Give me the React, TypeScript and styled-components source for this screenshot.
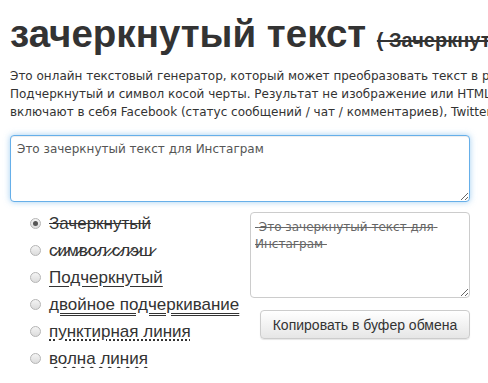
import React, { useEffect, useRef, useState } from 'react';
import styled, { createGlobalStyle, css } from 'styled-components';

const Global = createGlobalStyle`
  html, body {
    margin: 0;
    padding: 0;
    background: #fff;
    overflow: hidden;
  }
  body {
    font-family: "Liberation Sans", Arial, sans-serif;
    color: #333;
  }
`;

type StyleKind = 'strike' | 'slash' | 'under' | 'double' | 'dotted' | 'wave';

// symbol slash uses the combining short solidus overlay, as the real generator does
const slash = (s: string) =>
  s
    .split('')
    .map((c) => c + '\u0337')
    .join('');

const options: { kind: StyleKind; label: string }[] = [
  { kind: 'strike', label: 'Зачеркнутый' },
  { kind: 'slash', label: slash('символ слэш') },
  { kind: 'under', label: 'Подчеркнутый' },
  { kind: 'double', label: 'двойное подчеркивание' },
  { kind: 'dotted', label: 'пунктирная линия' },
  { kind: 'wave', label: 'волна линия' },
];

const App = () => {
  const [text, setText] = useState('Это зачеркнутый текст для Инстаграм');
  const [kind, setKind] = useState<StyleKind>('strike');
  const inputRef = useRef<HTMLTextAreaElement>(null);

  useEffect(() => {
    const el = inputRef.current;
    if (el) {
      el.focus();
      el.setSelectionRange(el.value.length, el.value.length);
    }
  }, []);

  return (
    <>
      <Global />
      <Page>
        <Title>
          зачеркнутый текст <Sub>( Зачеркнутый текст )</Sub>
        </Title>
        <Intro>
          <span>Это онлайн текстовый генератор, который может преобразовать текст в различные стили: Зачеркнутый,</span>
          <span>Подчеркнутый и символ косой черты. Результат не изображение или HTML, а текст Unicode,</span>
          <span>включают в себя Facebook (статус сообщений / чат / комментариев), Twitter, Instagram</span>
        </Intro>
        <Input ref={inputRef} value={text} onChange={(e) => setText(e.target.value)} />
        <Bottom>
          <List>
            {options.map((o) => (
              <Option key={o.kind} onClick={() => setKind(o.kind)}>
                <Radio checked={kind === o.kind} />
                <Label kind={o.kind}>{o.label}</Label>
              </Option>
            ))}
          </List>
          <Side>
            <Output readOnly value={' ' + text + ' '} kind={kind} />
            <CopyButton>Копировать в буфер обмена</CopyButton>
          </Side>
        </Bottom>
      </Page>
    </>
  );
};

export default App;

const Page = styled.div`
  width: 700px;
  padding: 12px 10px 0;
`;

const Title = styled.h1`
  margin: 0;
  font-size: 38.5px;
  font-weight: bold;
  line-height: 44px;
  color: #333;
  white-space: nowrap;
`;

const Sub = styled.small`
  font-size: 20px;
  font-weight: bold;
  text-decoration: line-through;
  text-decoration-thickness: 2px;
  white-space: pre;
`;

const Intro = styled.p`
  margin: 5px 0 0;
  font-family: "DejaVu Sans", Tahoma, sans-serif;
  font-size: 12px;
  line-height: 18px;
  color: #333;
  span {
    display: block;
    white-space: nowrap;
  }
`;

const Input = styled.textarea`
  display: block;
  box-sizing: border-box;
  width: 460px;
  height: 67px;
  margin-top: 14px;
  padding: 6px 6px;
  font-family: "DejaVu Sans", Tahoma, sans-serif;
  font-size: 12px;
  color: #555;
  caret-color: #000;
  border: 1px solid #66afe9;
  border-radius: 4px;
  outline: none;
  box-shadow: inset 0 1px 1px rgba(0, 0, 0, 0.075), 0 0 6px rgba(102, 175, 233, 0.6);
  resize: vertical;
`;

const Bottom = styled.div`
  display: flex;
  width: 460px;
  margin-top: 10px;
`;

const List = styled.div`
  display: flex;
  flex-direction: column;
  gap: 8px;
  padding: 2px 0 0 20px;
  flex: 1;
`;

const Option = styled.label`
  display: flex;
  align-items: center;
  gap: 8px;
  height: 19px;
  cursor: pointer;
`;

const Radio = styled.span<{ checked: boolean }>`
  flex: none;
  width: 11px;
  height: 11px;
  border-radius: 50%;
  box-sizing: border-box;
  border: 1px solid #b5b5b5;
  background: linear-gradient(#f4f4f4, #dcdcdc);
  position: relative;
  ${({ checked }) =>
    checked &&
    css`
      &::after {
        content: '';
        position: absolute;
        left: 2px;
        top: 2px;
        width: 5px;
        height: 5px;
        border-radius: 50%;
        background: #555;
      }
    `}
`;

const decoration = (kind: StyleKind) => {
  switch (kind) {
    case 'strike':
      return css`
        text-decoration: line-through;
      `;
    case 'slash':
      return css`
        text-decoration: none;
      `;
    case 'under':
      return css`
        text-decoration: underline;
      `;
    case 'double':
      return css`
        text-decoration: underline double;
      `;
    case 'dotted':
      return css`
        text-decoration: underline dotted;
        text-decoration-thickness: 2px;
      `;
    case 'wave':
      return css`
        text-decoration: underline wavy;
      `;
  }
};

const Label = styled.span<{ kind: StyleKind }>`
  font-size: 17px;
  color: #333;
  white-space: pre;
  padding-right: 8px;
  text-decoration-thickness: 1px;
  text-underline-offset: 3px;
  ${({ kind }) => decoration(kind)}
`;

const Side = styled.div`
  width: 220px;
  display: flex;
  flex-direction: column;
  align-items: flex-end;
`;

const Output = styled.textarea<{ kind: StyleKind }>`
  display: block;
  box-sizing: border-box;
  width: 220px;
  height: 86px;
  padding: 6px 4px;
  font-family: "DejaVu Sans", Tahoma, sans-serif;
  font-size: 12px;
  line-height: 17px;
  color: #666;
  border: 1px solid #ccc;
  border-radius: 4px;
  outline: none;
  resize: vertical;
  white-space: pre-wrap;
  ${({ kind }) => decoration(kind)}
`;

const CopyButton = styled.button`
  margin-top: 12px;
  width: 210px;
  height: 29px;
  font-family: "Liberation Sans", Arial, sans-serif;
  font-size: 14px;
  color: #333;
  border: 1px solid #ccc;
  border-radius: 4px;
  background: linear-gradient(#fff, #e6e6e6);
  box-shadow: 0 1px 1px rgba(0, 0, 0, 0.1);
  cursor: pointer;
`;
